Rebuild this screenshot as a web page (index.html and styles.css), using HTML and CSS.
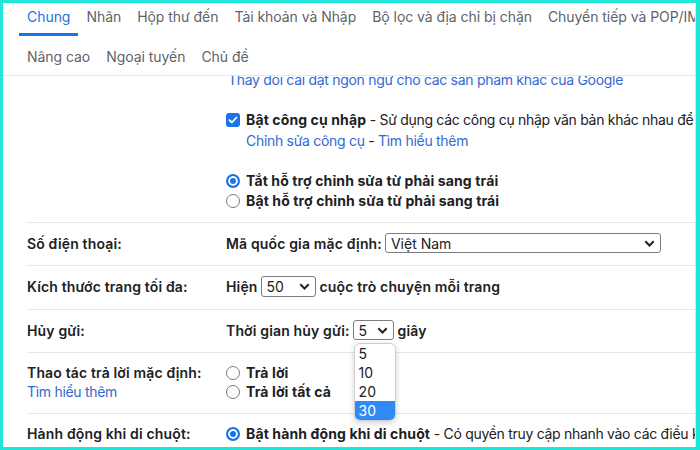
FILE: index.html
```html
<!DOCTYPE html>
<html lang="vi">
<head>
  <meta charset="UTF-8">
  <meta name="viewport" content="width=device-width, initial-scale=1.0">
  <title>Cài đặt - Chung</title>
  <link rel="stylesheet" href="styles.css">
</head>
<body>
  <div class="page">
    <header>
      <nav class="tabs tabs-top">
        <a class="tab active">Chung</a>
        <a class="tab">Nhãn</a>
        <a class="tab">Hộp thư đến</a>
        <a class="tab">Tài khoản và Nhập</a>
        <a class="tab">Bộ lọc và địa chỉ bị chặn</a>
        <a class="tab">Chuyển tiếp và POP/IMAP</a>
      </nav>
      <nav class="tabs tabs-bottom">
        <a class="tab">Nâng cao</a>
        <a class="tab">Ngoại tuyến</a>
        <a class="tab">Chủ đề</a>
      </nav>
    </header>

    <div class="settings">
      <div class="row row-lang">
        <div class="label"></div>
        <div class="value">
          <a class="link first-link">Thay đổi cài đặt ngôn ngữ cho các sản phẩm khác của Google</a>
          <div class="check-line">
            <span class="checkbox">
              <svg width="10" height="10" viewBox="0 0 10 10"><path d="M1.5 5.2l2.3 2.3 4.7-5" fill="none" stroke="#fff" stroke-width="1.8" stroke-linecap="round" stroke-linejoin="round"/></svg>
            </span>
            <b>Bật công cụ nhập</b><span class="desc">&nbsp;- Sử dụng các công cụ nhập văn bản khác nhau để nhập bằng ngôn ngữ bạn chọn</span>
          </div>
          <div class="sub-links desc"><a class="link">Chỉnh sửa công cụ</a> - <a class="link">Tìm hiểu thêm</a></div>
          <div class="radios rtl">
            <div class="opt"><span class="radio on"></span><b>Tắt hỗ trợ chỉnh sửa từ phải sang trái</b></div>
            <div class="opt"><span class="radio"></span><b>Bật hỗ trợ chỉnh sửa từ phải sang trái</b></div>
          </div>
        </div>
      </div>

      <div class="row">
        <div class="label">Số điện thoại:</div>
        <div class="value inline">
          <span class="strong">Mã quốc gia mặc định:</span>
          <div class="select select-country">
            <span>Việt Nam</span>
            <svg width="11" height="7" viewBox="0 0 11 7"><path d="M1.3 1.3l4.2 4.2 4.2-4.2" fill="none" stroke="#222" stroke-width="2"/></svg>
          </div>
        </div>
      </div>

      <div class="row">
        <div class="label">Kích thước trang tối đa:</div>
        <div class="value inline">
          <span class="strong">Hiện</span>
          <div class="select select-page">
            <span>50</span>
            <svg width="11" height="7" viewBox="0 0 11 7"><path d="M1.3 1.3l4.2 4.2 4.2-4.2" fill="none" stroke="#222" stroke-width="2"/></svg>
          </div>
          <span class="strong">cuộc trò chuyện mỗi trang</span>
        </div>
      </div>

      <div class="row">
        <div class="label">Hủy gửi:</div>
        <div class="value inline">
          <span class="strong">Thời gian hủy gửi:</span>
          <div class="select select-undo">
            <span>5</span>
            <svg width="11" height="7" viewBox="0 0 11 7"><path d="M1.3 1.3l4.2 4.2 4.2-4.2" fill="none" stroke="#222" stroke-width="2"/></svg>
            <div class="dropdown">
              <div>5</div>
              <div>10</div>
              <div>20</div>
              <div class="picked">30</div>
            </div>
          </div>
          <span class="strong">giây</span>
        </div>
      </div>

      <div class="row row-top">
        <div class="label">
          Thao tác trả lời mặc định:
          <a class="link learn">Tìm hiểu thêm</a>
        </div>
        <div class="value radios">
          <div class="opt"><span class="radio"></span><b>Trả lời</b></div>
          <div class="opt"><span class="radio"></span><b>Trả lời tất cả</b></div>
        </div>
      </div>

      <div class="row">
        <div class="label">Hành động khi di chuột:</div>
        <div class="value">
          <div class="opt"><span class="radio on"></span><b>Bật hành động khi di chuột</b><span class="desc">&nbsp;- Có quyền truy cập nhanh vào các điều khiển lưu trữ, xóa, đánh dấu là đã đọc</span></div>
        </div>
      </div>
    </div>
  </div>
</body>
</html>
```

FILE: styles.css
```css
body {
  margin: 0;
  padding: 3px 4px 3px 3px;
  background-color: #20e5d9;
  font-family: Inter, "Noto Sans", sans-serif;
  font-size: 14px;
  color: #202124;
}
.page {
  box-sizing: border-box;
  width: 693px;
  height: 444px;
  background-color: #fff;
  border-right: 1px solid #e2e2e2;
  overflow: hidden;
}
header {
  border-bottom: 1px solid #e6e6e6;
}
.tabs {
  display: flex;
  white-space: nowrap;
  padding-left: 16px;
}
.tab {
  color: #5f6368;
  line-height: 18px;
  padding: 5px 8px 7px;
  border-bottom: 3px solid transparent;
  letter-spacing: -0.05px;
}
.tab.active {
  color: #1a73e8;
  border-bottom-color: #1a73e8;
}
.tabs-bottom {
  padding-top: 12px;
  padding-bottom: 9px;
}
.tabs-bottom .tab {
  padding: 0 8px;
  border: none;
}
.settings {
  padding-left: 24px;
  height: 371px;
  overflow: hidden;
}
.row {
  display: grid;
  grid-template-columns: 199px 1fr;
  align-items: center;
  border-top: 1px solid #e6e6e6;
  padding: 10px 0 12px;
  line-height: 19px;
  white-space: nowrap;
}
.row-lang {
  border-top: none;
  margin-top: -6px;
  padding: 0 0 11px;
}
.row-top {
  align-items: start;
}
.label,
.strong {
  font-weight: 600;
  letter-spacing: 0.15px;
}
b {
  font-weight: 700;
  letter-spacing: 0.12px;
}
.desc {
  letter-spacing: -0.3px;
}
.link {
  color: #3468d3;
  letter-spacing: -0.3px;
}
.learn {
  display: block;
  font-weight: 400;
}
.first-link {
  display: block;
  margin-left: 2px;
}
.check-line {
  display: flex;
  align-items: center;
  margin-top: 20px;
  line-height: 21px;
}
.checkbox {
  display: inline-flex;
  align-items: center;
  justify-content: center;
  width: 14px;
  height: 14px;
  border-radius: 3px;
  background-color: #1a73e8;
  margin-right: 6px;
}
.sub-links {
  padding-left: 20px;
  line-height: 21px;
}
.rtl {
  margin-top: 20px;
  line-height: 20px;
}
.opt {
  display: flex;
  align-items: center;
}
.radio {
  box-sizing: border-box;
  width: 14px;
  height: 14px;
  border-radius: 50%;
  border: 1px solid #7a7a7a;
  margin-right: 6px;
  flex-shrink: 0;
}
.radio.on {
  border: 2px solid #1a73e8;
  background-color: #1a73e8;
  box-shadow: inset 0 0 0 2px #fff;
}
.inline {
  display: flex;
  align-items: center;
}
.select {
  position: relative;
  box-sizing: border-box;
  display: flex;
  align-items: center;
  justify-content: space-between;
  height: 20px;
  padding: 0 5px 0 5px;
  margin: 0 4px 0 3px;
  border: 1px solid #7d7d7d;
  border-radius: 3px;
  font-weight: 400;
  letter-spacing: 0;
}
.select-country {
  width: 276px;
}
.select-page {
  width: 55px;
  height: 21px;
}
.select-undo {
  width: 41px;
}
.dropdown {
  position: absolute;
  top: 22px;
  left: 0;
  width: 40px;
  background-color: #fff;
  border: 1px solid #cfcfcf;
  border-radius: 6px;
  box-shadow: 0 2px 6px rgba(0, 0, 0, 0.18);
  overflow: hidden;
  z-index: 5;
}
.dropdown div {
  height: 19px;
  line-height: 19px;
  padding-left: 4px;
}
.dropdown .picked {
  background-color: #2f8af5;
  color: #fff;
}
```
